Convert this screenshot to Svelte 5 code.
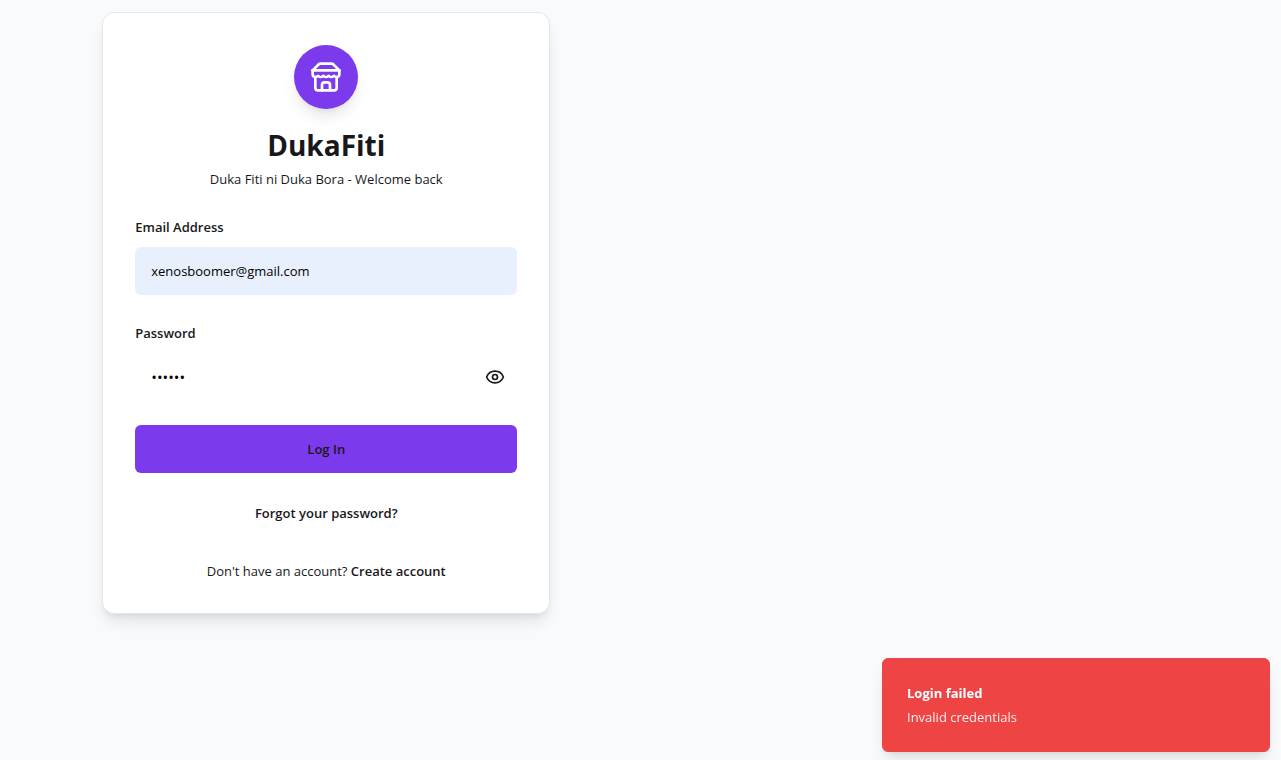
<script>
  let email = $state('xenosboomer@gmail.com');
  let password = $state('secret');
  let visible = $state(false);
</script>

<main>
  <section class="card">
    <header>
      <div class="logo">
        <svg viewBox="0 0 24 24" width="32" height="32" aria-hidden="true">
          <path d="m2 7 4.41-4.41A2 2 0 0 1 7.83 2h8.34a2 2 0 0 1 1.42.59L22 7" />
          <path d="M4 12v8a2 2 0 0 0 2 2h12a2 2 0 0 0 2-2v-8" />
          <path d="M15 22v-4a2 2 0 0 0-2-2h-2a2 2 0 0 0-2 2v4" />
          <path d="M2 7h20" />
          <path d="M22 7v3a2 2 0 0 1-2 2a2.7 2.7 0 0 1-1.59-.63.7.7 0 0 0-.82 0A2.7 2.7 0 0 1 16 12a2.7 2.7 0 0 1-1.59-.63.7.7 0 0 0-.82 0A2.7 2.7 0 0 1 12 12a2.7 2.7 0 0 1-1.59-.63.7.7 0 0 0-.82 0A2.7 2.7 0 0 1 8 12a2.7 2.7 0 0 1-1.59-.63.7.7 0 0 0-.82 0A2.7 2.7 0 0 1 4 12a2 2 0 0 1-2-2V7" />
        </svg>
      </div>
      <h1>DukaFiti</h1>
      <p>Duka Fiti ni Duka Bora - Welcome back</p>
    </header>

    <form onsubmit={(e) => e.preventDefault()}>
      <div class="field">
        <label for="email">Email Address</label>
        <input id="email" class="filled" type="email" bind:value={email} />
      </div>
      <div class="field">
        <label for="password">Password</label>
        <div class="secret">
          <input id="password" type={visible ? 'text' : 'password'} bind:value={password} />
          <button type="button" class="eye" aria-label="Show password" onclick={() => (visible = !visible)}>
            <svg viewBox="0 0 24 24" width="20" height="20" aria-hidden="true">
              <path d="M2.062 12.348a1 1 0 0 1 0-.696 10.75 10.75 0 0 1 19.876 0 1 1 0 0 1 0 .696 10.75 10.75 0 0 1-19.876 0" />
              <circle cx="12" cy="12" r="3" />
            </svg>
          </button>
        </div>
      </div>
      <button type="submit" class="submit">Log In</button>
    </form>

    <a class="forgot" href="#forgot">Forgot your password?</a>
    <p class="signup">Don't have an account? <a href="#signup">Create account</a></p>
  </section>
</main>

<div class="toast" role="alert">
  <strong>Login failed</strong>
  <span>Invalid credentials</span>
</div>

<style>
  :global(body) {
    background: #f9fafb;
    color: #18181b;
    font: 13px/20px 'Segoe UI', 'Open Sans', 'Noto Sans', sans-serif;
  }
  :global(*) {
    box-sizing: border-box;
  }
  main {
    display: grid;
    grid-template-columns: 1fr 1fr;
    min-height: 100vh;
    padding: 12px;
    align-items: start;
  }
  .card {
    display: flex;
    flex-direction: column;
    align-items: center;
    justify-self: center;
    width: 100%;
    max-width: 448px;
    padding: 32px;
    background: #fff;
    border: 1px solid #e5e7eb;
    border-radius: 12px;
    box-shadow: 0 10px 15px -3px rgb(0 0 0 / 0.1), 0 4px 6px -4px rgb(0 0 0 / 0.1);
  }
  header {
    display: flex;
    flex-direction: column;
    align-items: center;
    margin-bottom: 28px;
  }
  .logo {
    display: grid;
    place-items: center;
    width: 64px;
    height: 64px;
    margin-bottom: 16px;
    border-radius: 50%;
    background: #7c3aed;
    color: #fff;
    box-shadow: 0 10px 15px -3px rgb(0 0 0 / 0.1), 0 4px 6px -4px rgb(0 0 0 / 0.1);
  }
  svg {
    display: block;
    fill: none;
    stroke: currentColor;
    stroke-width: 2;
    stroke-linecap: round;
    stroke-linejoin: round;
  }
  h1 {
    margin: 0 0 4px;
    font-size: 28px;
    line-height: 40px;
    font-weight: 700;
  }
  p {
    margin: 0;
  }
  form {
    display: flex;
    flex-direction: column;
    width: 100%;
  }
  .field {
    display: flex;
    flex-direction: column;
    gap: 10px;
    margin-bottom: 28px;
  }
  .field + .field {
    margin-bottom: 24px;
  }
  label,
  a {
    font-weight: 600;
  }
  input {
    width: 100%;
    height: 48px;
    padding: 0 16px;
    border: 0;
    border-radius: 6px;
    background: #fff;
    color: #000;
    font: inherit;
  }
  .filled {
    background: #e8f0fe;
  }
  .secret {
    position: relative;
  }
  .secret input[type='password'] {
    font-size: 15px;
  }
  .eye {
    position: absolute;
    top: 0;
    right: 0;
    display: grid;
    place-items: center;
    width: 44px;
    height: 48px;
    padding: 0;
    border: 0;
    background: none;
    color: inherit;
    cursor: pointer;
  }
  .submit {
    height: 48px;
    border: 0;
    border-radius: 6px;
    background: #7c3aed;
    color: inherit;
    font: inherit;
    font-weight: 600;
    cursor: pointer;
  }
  a {
    color: inherit;
    text-decoration: none;
  }
  .forgot {
    margin: 30px 0 38px;
  }
  .toast {
    position: fixed;
    right: 11px;
    bottom: 8px;
    display: flex;
    flex-direction: column;
    gap: 4px;
    width: 388px;
    max-width: calc(100% - 22px);
    padding: 24px;
    border: 1px solid #ef4444;
    border-radius: 6px;
    background: #ef4444;
    color: #fff;
    box-shadow: 0 10px 15px -3px rgb(0 0 0 / 0.1), 0 4px 6px -4px rgb(0 0 0 / 0.1);
  }
  .toast strong {
    font-weight: 700;
  }
  .toast span {
    opacity: 0.9;
  }
</style>
